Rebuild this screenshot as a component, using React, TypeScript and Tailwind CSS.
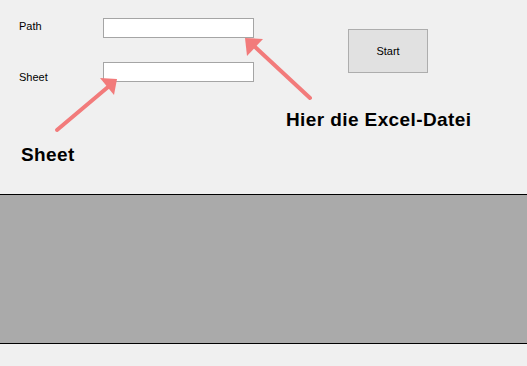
import React from "react";

export default function App() {
  return (
    <div
      className="relative w-[527px] h-[366px] bg-[#f0f0f0] overflow-hidden text-black"
      style={{ fontFamily: '"Liberation Sans", Arial, sans-serif' }}
    >
      {/* form area */}
      <div className="flex h-[194px]">
        <div className="flex flex-col pl-[19px] pt-[20px] w-[103px] text-[11px] leading-[13px]">
          <div>Path</div>
          <div className="mt-[38px]">Sheet</div>
        </div>
        <div className="flex flex-col pt-[18px] gap-[24px]">
          <div className="w-[151px] h-[20px] bg-white border border-[#a5a5a5]" />
          <div className="w-[151px] h-[20px] bg-white border border-[#a5a5a5]" />
        </div>
        <div className="ml-[94px] pt-[29px]">
          <div className="w-[80px] h-[44px] bg-[#e1e1e1] border border-[#adadad] flex items-center justify-center text-[11px] leading-[13px]">
            Start
          </div>
        </div>
      </div>

      {/* grey panel */}
      <div className="h-[150px] bg-[#aaaaaa] border-y border-black" />

      {/* annotations */}
      <div className="absolute left-[286px] top-[110px] text-[19px] leading-none font-bold tracking-[0.4px]">
        Hier die Excel-Datei
      </div>
      <div className="absolute left-[21px] top-[145px] text-[19px] leading-none font-bold tracking-[0.4px]">
        Sheet
      </div>
      <svg
        className="absolute inset-0 pointer-events-none"
        width="527"
        height="366"
        viewBox="0 0 527 366"
      >
        <line x1="310" y1="98" x2="254" y2="46" stroke="#f27b7b" strokeWidth="4" strokeLinecap="round" />
        <polygon points="245,38 263,39 247,56" fill="#f27b7b" />
        <line x1="57" y1="130" x2="108" y2="87" stroke="#f27b7b" strokeWidth="4" strokeLinecap="round" />
        <polygon points="117,79 100,78 114,95" fill="#f27b7b" />
      </svg>
    </div>
  );
}
